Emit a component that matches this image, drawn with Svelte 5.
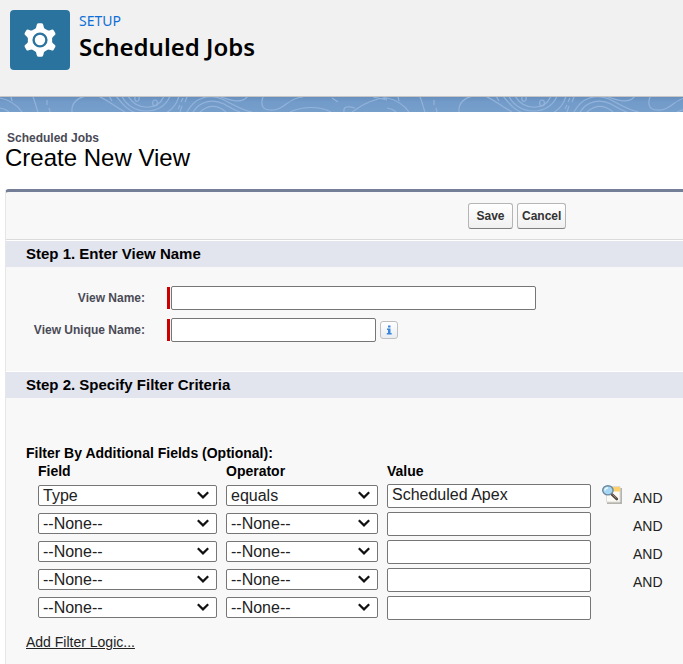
<script>
  const fields = ['--None--', 'Type', 'Job Name', 'Submitted By'];
  const operators = ['--None--', 'equals', 'not equal to', 'contains'];

  let viewName = $state('');
  let uniqueName = $state('');
  let filters = $state([
    { field: 'Type', operator: 'equals', value: 'Scheduled Apex' },
    { field: '--None--', operator: '--None--', value: '' },
    { field: '--None--', operator: '--None--', value: '' },
    { field: '--None--', operator: '--None--', value: '' },
    { field: '--None--', operator: '--None--', value: '' }
  ]);
</script>

{#snippet chevron()}
  <svg class="chevron" viewBox="0 0 12 8" aria-hidden="true">
    <path d="M0.800 1.2 L6 6.4 L11.200 1.2" fill="none" stroke="#111" stroke-width="2.2" />
  </svg>
{/snippet}

<div class="page">
  <header class="setup">
    <span class="badge">
      <svg viewBox="0 0 60 60" aria-hidden="true">
        <g fill="#fff">
          <circle cx="30" cy="30" r="12.2" />
          {#each [0, 60, 120, 180, 240, 300] as angle}
            <path
              d="M24.4 20 Q26.400 18.5 26.700 15 Q26.900 13.3 28.4 13.3 H31.600 Q33.1 13.3 33.3 15 Q33.600 18.5 35.600 20 Z"
              transform="rotate({angle} 30 30)"
            />
          {/each}
        </g>
        <circle cx="30" cy="30" r="6.4" fill="#fff" stroke="#2a739e" stroke-width="2.4" />
      </svg>
    </span>
    <div class="heading">
      <span class="eyebrow">SETUP</span>
      <h1>Scheduled Jobs</h1>
    </div>
  </header>

  <div class="band">
    <svg width="100%" height="15" aria-hidden="true">
      <defs>
        <pattern id="contours" width="387" height="15" patternUnits="userSpaceOnUse">
          <g fill="none" stroke="#92b3da" stroke-width="1.2">
            <path d="M0 1 C10 3 17 8 22 15 M0 11 Q6 12 9 15 M33 0 C35 4 36 10 38 15" />
            <path d="M11 0 L12 4 M47 3 L47 8 M49 11 L50 15" />
            <path d="M72 15 C71 6 78 0 87 -1 M98 -1 C108 3 115 10 125 15" />
            <path d="M109 -1 L112 4 M116 -1 C124 9 128 13 136 16" />
            <path d="M122 -1 C130 18 162 20 170 -1 M128 -1 C137 14 158 14 164 -1" />
            <path d="M166 16 C173 12 177 7 179 -1" />
            <ellipse cx="137" cy="1.5" rx="2.2" ry="2.8" />
            <ellipse cx="155" cy="6" rx="2.4" ry="3" />
            <path d="M183 1 L181 5 M180 8 L178 12 M187 0 L185 5 M182 9 L180 15" />
            <path d="M187 15 C195 0 209 -3 222 2 C234 8 243 14 252 15" />
            <path d="M193 15 C201 3 214 2 224 7 Q234 13 240 15 M200 15 C209 7 218 8 226 15" />
            <path d="M218 -1 C232 4 242 7 248 -1" />
            <path d="M263 0 C260 8 263 13 270 13 C285 14 286 1 303 0 M290 15 C303 9 320 9 331 15" />
            <path d="M332 1 L338 5 M344 15 C343 9 348 9 355 11 M352 15 C363 7 376 1 387 1" />
            <path d="M373 0 L387 3 M383 -1 C384 1 387 2 387 2" />
          </g>
        </pattern>
      </defs>
      <rect width="100%" height="15" fill="url(#contours)" />
    </svg>
  </div>

  <main>
    <div class="title">
      <span class="crumb">Scheduled Jobs</span>
      <h2>Create New View</h2>
    </div>

    <form class="panel" onsubmit={(e) => e.preventDefault()}>
      <div class="actions">
        <button type="submit">Save</button>
        <button type="button">Cancel</button>
      </div>

      <h3>Step 1. Enter View Name</h3>
      <div class="names">
        <div class="line">
          <label for="view-name">View Name:</label>
          <span class="required"></span>
          <input id="view-name" class="long" type="text" required bind:value={viewName} />
        </div>
        <div class="line">
          <label for="unique-name">View Unique Name:</label>
          <span class="required"></span>
          <input id="unique-name" class="short" type="text" required bind:value={uniqueName} />
          <button class="info" type="button" aria-label="Help for View Unique Name">
            <svg viewBox="0 0 16 16" aria-hidden="true">
              <path d="M7 3.500h2.500v2H7z M6 6.500h3.500v4.500h1.200v1.500H5.800V11H7V8H6z" fill="#3b86dc" />
            </svg>
          </button>
        </div>
      </div>

      <h3>Step 2. Specify Filter Criteria</h3>
      <div class="criteria">
        <h4>Filter By Additional Fields (Optional):</h4>
        <table>
          <thead>
            <tr>
              <th class="field" scope="col">Field</th>
              <th class="operator" scope="col">Operator</th>
              <th class="value" scope="col">Value</th>
              <td class="lookup"></td>
              <td></td>
            </tr>
          </thead>
          <tbody>
            {#each filters as filter, i}
              <tr>
                <td>
                  <div class="select">
                    <select aria-label="Field {i + 1}" bind:value={filter.field}>
                      {#each fields as name}<option>{name}</option>{/each}
                    </select>
                    {@render chevron()}
                  </div>
                </td>
                <td>
                  <div class="select">
                    <select aria-label="Operator {i + 1}" bind:value={filter.operator}>
                      {#each operators as name}<option>{name}</option>{/each}
                    </select>
                    {@render chevron()}
                  </div>
                </td>
                <td><input type="text" aria-label="Value {i + 1}" bind:value={filter.value} /></td>
                <td>
                  {#if i === 0}
                    <button class="find" type="button" aria-label="Look up value">
                      <svg viewBox="0 0 20 20" aria-hidden="true">
                        <path d="M5 3h15v16H5z" fill="#b4b3ae" />
                        <path d="M4.500 1.500h13.500v15.500H4.500z" fill="#fbfaf5" stroke="#dedcd4" />
                        <path d="M10 2h8v4.500h-8z" fill="#ffd16b" />
                        <path d="M10 9.500 L14.800 14" stroke="#4a4340" stroke-width="2.600" stroke-linecap="round" />
                        <path d="M10.500 9.500 L14.500 13.200" stroke="#c2956b" stroke-width="0.900" />
                        <ellipse cx="5.900" cy="5.300" rx="5.200" ry="4.600" fill="#a5d6f3" stroke="#6c879d" stroke-width="1.400" />
                        <path d="M2.800 5.500 Q3.300 2.900 6 2.700" fill="none" stroke="#e8f7ff" stroke-width="1.500" />
                      </svg>
                    </button>
                  {/if}
                </td>
                <td class="and">{i < filters.length - 1 ? 'AND' : ''}</td>
              </tr>
            {/each}
          </tbody>
        </table>
        <a href="#filter-logic">Add Filter Logic...</a>
      </div>
    </form>
  </main>
</div>

<style>
  :global(body) {
    margin: 0;
    background: #fff;
  }
  .page {
    display: flex;
    flex-direction: column;
    min-height: 100vh;
    font-family: 'Liberation Sans', Arial, sans-serif;
    color: #000;
  }
  h1, h2, h3, h4 {
    margin: 0;
  }
  .setup {
    display: flex;
    gap: 9px;
    padding: 10px 10px 26px;
    background: #f1f1f1;
    border-bottom: 1px solid #c9c7c5;
    font-family: 'Noto Sans', sans-serif;
  }
  .badge {
    width: 60px;
    height: 60px;
    border-radius: 4px;
    background: #2a739e;
  }
  .badge svg, .info svg, .find svg {
    display: block;
    width: 100%;
    height: 100%;
  }
  .heading {
    display: flex;
    flex-direction: column;
  }
  .eyebrow {
    font-size: 14px;
    line-height: 22px;
    color: #0d6fd6;
  }
  h1 {
    font-size: 24px;
    font-weight: 600;
    line-height: 30px;
  }
  .band {
    height: 15px;
    background: linear-gradient(#6790c0, #739bc9 5px, #779fcc);
  }
  .band svg {
    display: block;
  }
  main {
    flex: 1;
    display: flex;
    flex-direction: column;
    padding-left: 5px;
  }
  .title {
    padding: 19px 0 18px;
  }
  .crumb {
    display: block;
    padding-left: 2px;
    font-size: 12px;
    font-weight: bold;
    line-height: 14px;
    color: #4a4a56;
  }
  h2 {
    font-size: 24px;
    font-weight: normal;
    line-height: 26px;
  }
  .panel {
    flex: 1;
    border-top: 3px solid #747e96;
    border-left: 1px solid #e6e6e8;
    border-top-left-radius: 4px;
    background: #f8f8f8;
  }
  .actions {
    display: flex;
    gap: 4px;
    padding: 11px 0 10px 462px;
    border-bottom: 1px solid #dbdbdb;
  }
  .actions button {
    height: 26px;
    padding: 0 4px;
    min-width: 45px;
    border: 1px solid #b5b5b5;
    border-bottom-color: #7f7f7f;
    border-radius: 3px;
    background: linear-gradient(#fff, #f0f0f0);
    font: bold 12px 'Liberation Sans', Arial, sans-serif;
    color: #333;
  }
  h3 {
    padding-left: 20px;
    border-top: 1px solid #fff;
    background: #e2e4ee;
    font-size: 15px;
    line-height: 26px;
  }
  .names {
    display: flex;
    flex-direction: column;
    gap: 8px;
    padding: 19px 0 29px;
  }
  .line {
    display: flex;
    align-items: center;
  }
  label {
    width: 139px;
    margin-right: 22px;
    text-align: right;
    font-size: 12px;
    font-weight: bold;
    color: #4a4a56;
  }
  .required {
    width: 3px;
    height: 22px;
    margin-right: 1px;
    background: #c00;
  }
  input, select {
    box-sizing: border-box;
    border: 1px solid #767676;
    border-radius: 2px;
    background: #fff;
    font: 16px 'Liberation Sans', Arial, sans-serif;
    color: #222;
  }
  input {
    height: 24px;
    padding: 0 4px 2px;
  }
  .long {
    width: 365px;
  }
  .short {
    width: 205px;
  }
  .info {
    width: 18px;
    height: 18px;
    margin-left: 4px;
    padding: 0;
    border: 1px solid #bfbfbf;
    border-radius: 3px;
    background: linear-gradient(#fff, #e8edf2);
  }
  .criteria {
    padding: 46px 0 12px 20px;
  }
  h4 {
    font-size: 14px;
    line-height: 18px;
  }
  table {
    margin-left: 12px;
    border-collapse: collapse;
  }
  th, td {
    padding: 0 9px 0 0;
    text-align: left;
  }
  th {
    padding-bottom: 2px;
    font-size: 14px;
    line-height: 18px;
  }
  .field {
    width: 179px;
  }
  .operator {
    width: 152px;
  }
  .value {
    width: 204px;
  }
  .lookup {
    width: 24px;
  }
  tbody td {
    height: 28px;
  }
  tbody input {
    display: block;
    width: 100%;
  }
  .select {
    display: grid;
    align-items: center;
    padding-bottom: 2px;
  }
  .select > :global(*) {
    grid-area: 1 / 1;
  }
  select {
    appearance: none;
    width: 100%;
    height: 21px;
    padding: 0 4px;
  }
  .chevron {
    width: 12px;
    height: 8px;
    margin-right: 8px;
    justify-self: end;
    pointer-events: none;
  }
  .find {
    display: block;
    width: 20px;
    height: 20px;
    margin: 0 0 2px 2px;
    padding: 0;
    border: 0;
    background: none;
  }
  .and {
    font-size: 14px;
    padding-top: 3px;
    height: 25px;
    color: #222;
  }
  a {
    display: inline-block;
    margin-top: 12px;
    font-size: 14px;
    line-height: 16px;
    color: #222;
  }
</style>
